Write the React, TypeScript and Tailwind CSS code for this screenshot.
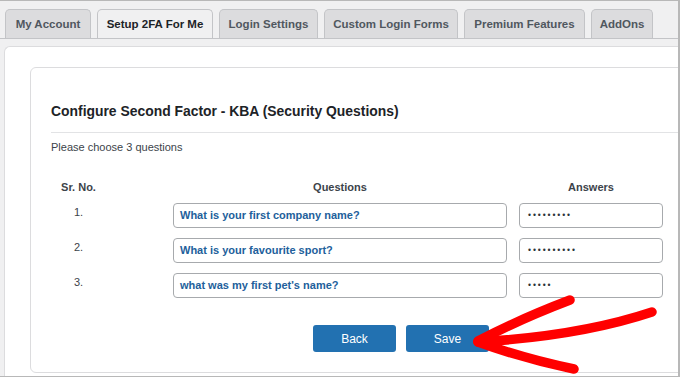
import React from "react";

const tabs = [
  { label: "My Account", w: "w-[86px]", active: false },
  { label: "Setup 2FA For Me", w: "w-[116px]", active: true },
  { label: "Login Settings", w: "w-[99px]", active: false },
  { label: "Custom Login Forms", w: "w-[134px]", active: false },
  { label: "Premium Features", w: "w-[121px]", active: false },
  { label: "AddOns", w: "w-[62px]", active: false },
];

const rows = [
  { n: "1.", q: "What is your first company name?", a: "•••••••••" },
  { n: "2.", q: "What is your favourite sport?", a: "••••••••••" },
  { n: "3.", q: "what was my first pet's name?", a: "•••••" },
];

export default function App() {
  return (
    <div className="relative w-[680px] h-[377px] overflow-hidden bg-[#f0f0f1] border-t border-r-2 border-b border-[#b8b8b8] flex flex-col font-['Liberation_Sans',Arial,sans-serif]">
      <div className="flex gap-[6px] pl-[5px] pt-[8px] border-b border-[#c3c4c7] shrink-0">
        {tabs.map((t) => (
          <div
            key={t.label}
            className={`${t.w} h-[29px] pt-[2px] flex items-center justify-center rounded-t-[5px] border border-b-0 border-[#c3c4c7] text-[11.5px] font-bold whitespace-nowrap ${
              t.active ? "bg-[#f0f0f1] text-[#1d2327]" : "bg-[#dcdcde] text-[#50575e]"
            }`}
          >
            {t.label}
          </div>
        ))}
      </div>
      <div className="flex-1 mt-[7px] ml-[4px] bg-white border-l border-t border-[#dcdcde] rounded-tl-[6px] pt-[20px] pl-[25px] overflow-hidden">
        <div className="w-[742px] border border-[#dcdcde] rounded-[6px] px-[20px] pt-[34px] pb-[20px]">
          <h2 className="text-[13.9px] leading-[19px] font-bold text-[#1d2327] whitespace-nowrap">
            Configure Second Factor - KBA (Security Questions)
          </h2>
          <div className="mt-[11px] h-px bg-[#e2e3e5] -mr-[20px]" />
          <p className="mt-[6px] text-[11px] leading-[16px] text-[#3c434a]">Please choose 3 questions</p>

          <div className="mt-[24px] flex text-[11px] leading-[16px] font-bold text-[#3c434a]">
            <div className="w-[55px] text-center">Sr. No.</div>
            <div className="ml-[67px] w-[334px] text-center">Questions</div>
            <div className="ml-[12px] w-[144px] text-center">Answers</div>
          </div>

          <div className="mt-[8px] flex flex-col gap-[10px]">
            {rows.map((r) => (
              <div key={r.n} className="flex items-start">
                <div className="w-[55px] pt-[1px] text-center text-[11px] leading-[16px] text-[#3c434a]">{r.n}</div>
                <div className="ml-[67px] w-[334px] h-[25px] border border-[#a7aaad] rounded-[4px] flex items-center pl-[6px] text-[11px] font-bold text-[#22609b] whitespace-nowrap">
                  {r.q}
                </div>
                <div className="ml-[12px] w-[144px] h-[25px] border border-[#a7aaad] rounded-[4px] flex items-center pl-[8px] text-[8.5px] tracking-[1.9px] text-[#2c3338]">
                  {r.a}
                </div>
              </div>
            ))}
          </div>

          <div className="mt-[27px] flex justify-center gap-[10px]">
            <button className="w-[83px] h-[27px] rounded-[3px] bg-[#2271b1] text-white text-[12px]">Back</button>
            <button className="w-[83px] h-[27px] rounded-[3px] bg-[#2271b1] text-white text-[12px]">Save</button>
          </div>
        </div>
      </div>

      <svg className="absolute left-0 top-0 pointer-events-none" width="680" height="377" viewBox="0 0 680 377">
        <g fill="none" stroke="#ff0000" strokeLinecap="round" strokeLinejoin="round">
          <path d="M 478 340 Q 520 318 570 299" strokeWidth="9.5" />
          <path d="M 478 341 Q 580 335 652 311" strokeWidth="9.5" />
          <path d="M 478 341 Q 525 358 574 368" strokeWidth="9.5" />
        </g>
      </svg>
    </div>
  );
}
